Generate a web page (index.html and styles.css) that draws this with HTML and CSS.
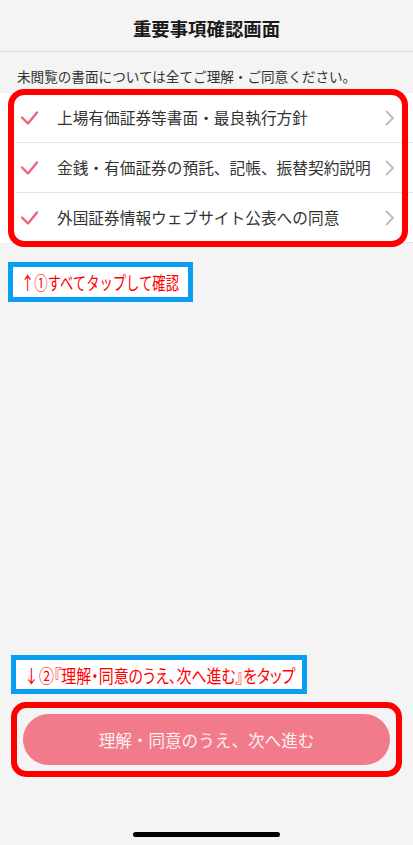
FILE: index.html
```html
<!DOCTYPE html>
<html lang="ja">
<head>
<meta charset="utf-8">
<title>重要事項確認画面</title>
<link rel="stylesheet" href="styles.css">
</head>
<body>
<div class="screen">
  <header class="header"><h1 class="title">重要事項確認画面</h1></header>
  <p class="intro">未閲覧の書面については全てご理解・ご同意ください。</p>
  <ul class="list">
    <li class="row"><div class="row-inner">
      <svg class="check" viewBox="0 0 20 20" width="20" height="20"><polyline points="3,9.5 9,15.5 18,4.5" fill="none" stroke="#f0627a" stroke-width="2.4" stroke-linecap="round" stroke-linejoin="round"/></svg>
      <span class="label">上場有価証券等書面・最良執行方針</span>
      <svg class="chev" viewBox="0 0 12 16" width="12" height="16"><polyline points="2.5,1.5 9,8 2.5,14.5" fill="none" stroke="#bfbfbf" stroke-width="2" stroke-linecap="round" stroke-linejoin="round"/></svg>
    </div></li>
    <li class="row"><div class="row-inner">
      <svg class="check" viewBox="0 0 20 20" width="20" height="20"><polyline points="3,9.5 9,15.5 18,4.5" fill="none" stroke="#f0627a" stroke-width="2.4" stroke-linecap="round" stroke-linejoin="round"/></svg>
      <span class="label">金銭・有価証券の預託、記帳、振替契約説明</span>
      <svg class="chev" viewBox="0 0 12 16" width="12" height="16"><polyline points="2.5,1.5 9,8 2.5,14.5" fill="none" stroke="#bfbfbf" stroke-width="2" stroke-linecap="round" stroke-linejoin="round"/></svg>
    </div></li>
    <li class="row"><div class="row-inner">
      <svg class="check" viewBox="0 0 20 20" width="20" height="20"><polyline points="3,9.5 9,15.5 18,4.5" fill="none" stroke="#f0627a" stroke-width="2.4" stroke-linecap="round" stroke-linejoin="round"/></svg>
      <span class="label">外国証券情報ウェブサイト公表への同意</span>
      <svg class="chev" viewBox="0 0 12 16" width="12" height="16"><polyline points="2.5,1.5 9,8 2.5,14.5" fill="none" stroke="#bfbfbf" stroke-width="2" stroke-linecap="round" stroke-linejoin="round"/></svg>
    </div></li>
  </ul>
  <div class="spacer"></div>
  <div class="footer">
    <button class="next" type="button">理解・同意のうえ、次へ進む</button>
  </div>
  <div class="home-bar"><span class="home-indicator"></span></div>

  <div class="mark mark-list"></div>
  <div class="note note-1"><span class="note-text">↑①すべてタップして確認</span></div>
  <div class="note note-2"><span class="note-text note-text-long">↓②『理解・同意のうえ、次へ進む』をタップ</span></div>
  <div class="mark mark-button"></div>
</div>
</body>
</html>
```
FILE: styles.css
```css
* { box-sizing: border-box; }
html, body { margin: 0; padding: 0; }
body {
  background: #f4f4f4;
  font-family: "Noto Sans CJK JP", "Noto Sans", sans-serif;
  color: #333;
}
.screen {
  position: relative;
  width: 413px;
  height: 845px;
  display: flex;
  flex-direction: column;
  overflow: hidden;
}
.header {
  height: 52px;
  padding-top: 5px;
  border-bottom: 1px solid #d9d9d9;
  display: flex;
  align-items: center;
  justify-content: center;
  background: #f4f4f4;
}
.title {
  margin: 0;
  font-size: 18.4px;
  font-weight: 700;
  color: #1a1a1a;
  line-height: 24px;
}
.intro {
  margin: 0;
  padding: 14px 0 7px 17px;
  font-size: 13.6px;
  line-height: 20px;
  color: #333;
  white-space: nowrap;
}
.list {
  list-style: none;
  margin: 0;
  padding: 0;
  background: #fff;
}
.row { padding-left: 16px; }
.row-inner {
  height: 50px;
  border-bottom: 1px solid #e4e4e4;
  display: flex;
  align-items: center;
  padding-left: 3px;
  padding-right: 17px;
}
.check { flex: none; }
.label {
  flex: 1;
  margin-left: 18px;
  font-size: 15.7px;
  color: #333;
  white-space: nowrap;
}
.chev { flex: none; }
.spacer { flex: 1; }
.footer {
  padding: 0 23px;
}
.next {
  display: block;
  width: 100%;
  height: 51px;
  border: none;
  border-radius: 26px;
  background: #f17b8b;
  color: #fdf0f2;
  font-family: "Noto Sans CJK JP", "Noto Sans", sans-serif;
  font-size: 16.6px;
  padding: 0;
}
.home-bar {
  height: 80px;
  display: flex;
  justify-content: center;
  padding-top: 67px;
}
.home-indicator {
  width: 147px;
  height: 5px;
  border-radius: 3px;
  background: #000;
}
.mark {
  position: absolute;
  border: 6px solid #ff0000;
  border-radius: 16px;
}
.mark-list { left: 8px; top: 89px; width: 400px; height: 158px; }
.mark-button { left: 11px; top: 702px; width: 391px; height: 75px; border-radius: 15px; }
.note {
  position: absolute;
  border: 5px solid #0a9ef2;
  background: #fff;
  display: flex;
  align-items: center;
  padding-left: 8px;
  overflow: hidden;
}
.note-1 { left: 8px; top: 262px; width: 185px; height: 40px; }
.note-2 { left: 11px; top: 655px; width: 296px; height: 39px; }
.note-text {
  display: inline-block;
  font-size: 18px;
  line-height: 22px;
  font-weight: 400;
  color: #ff0000;
  white-space: nowrap;
  transform: scaleX(0.74);
  transform-origin: left center;
}
.note-text-long {
  font-feature-settings: "palt";
  transform: scaleX(0.83);
}
```
